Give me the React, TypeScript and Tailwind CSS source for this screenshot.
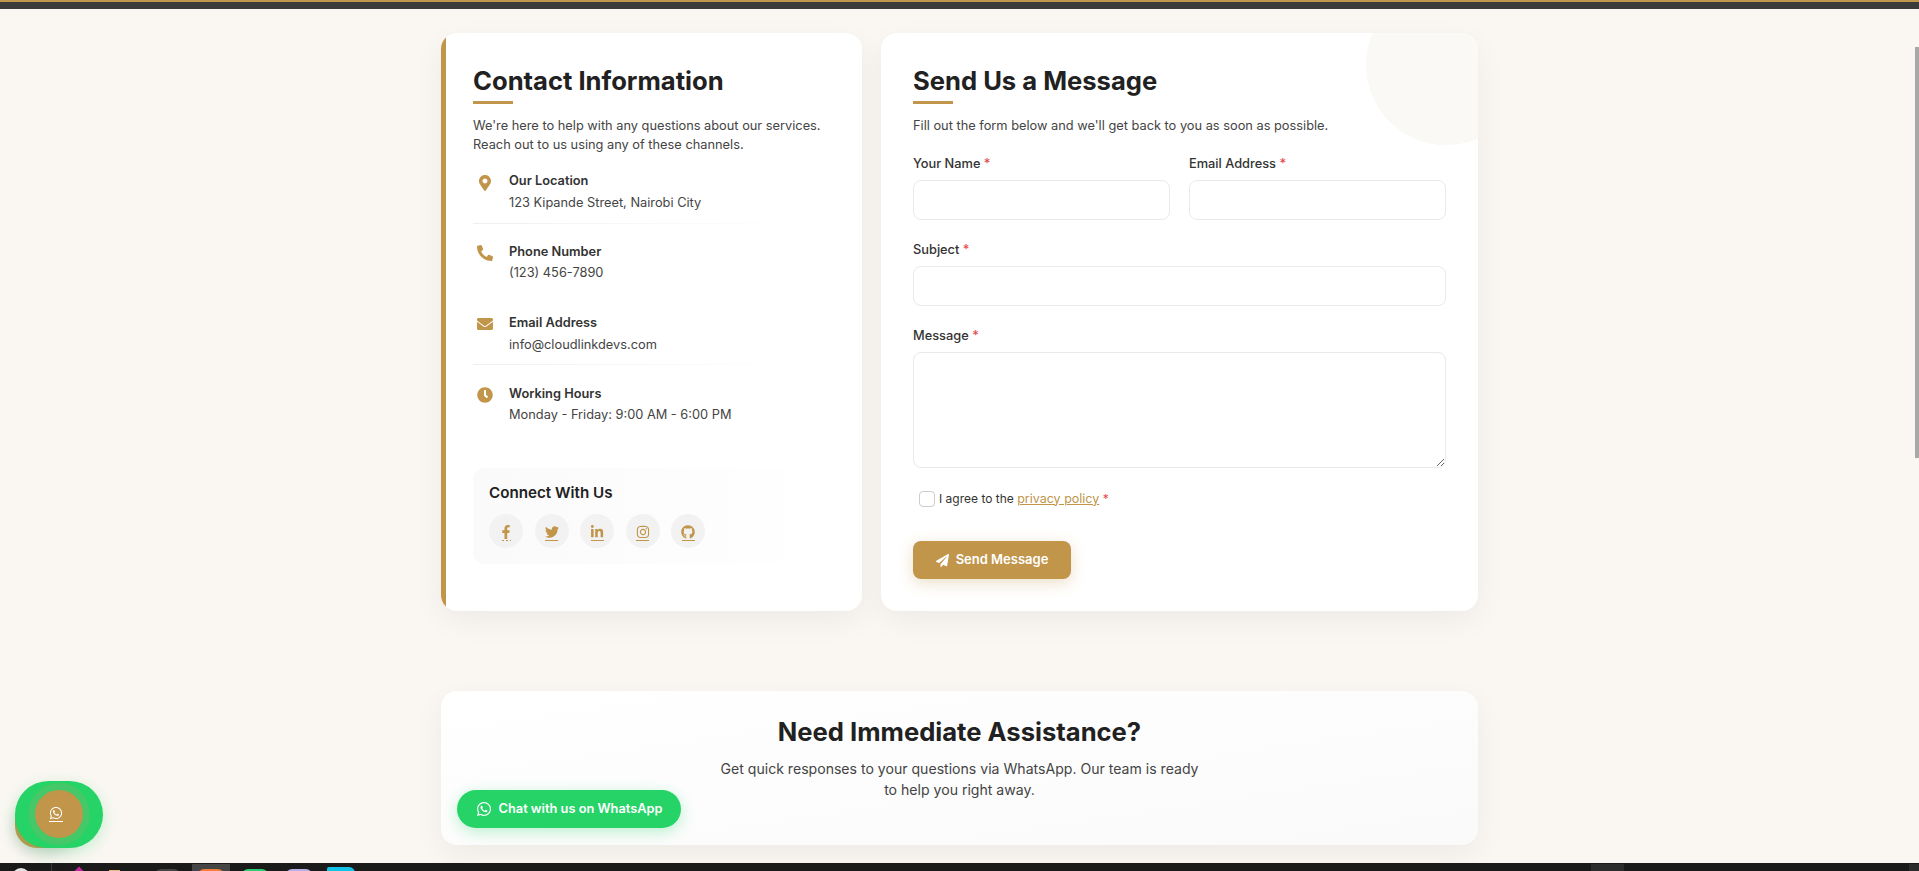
import React from "react";
import { FaMapMarkerAlt, FaPhoneAlt, FaEnvelope, FaClock, FaFacebookF, FaTwitter, FaLinkedinIn, FaInstagram, FaGithub, FaPaperPlane, FaWhatsapp } from "react-icons/fa";

function Title({ children }: { children: React.ReactNode }) {
  return (
    <div>
      <h2 className="text-[25.6px] leading-[32px] font-bold text-[#212121]">{children}</h2>
      <div className="mt-[4px] h-[3px] w-[40px] bg-[#c1954a]" />
    </div>
  );
}

function Info({ icon, label, value, gap, divider }: { icon: React.ReactNode; label: string; value: string; gap: string; divider?: string }) {
  return (
    <div className="relative h-[71px]">
      <div className="flex">
        <div className="flex h-[20px] w-[24px] shrink-0 items-start justify-center pt-[2px] text-[16px] text-[#c1954a]">{icon}</div>
        <div className="ml-[12px]">
          <div className="text-[12.8px] leading-[18px] font-semibold text-[#333333]">{label}</div>
          <div className={`text-[12.8px] leading-[18px] text-[#444444] ${gap}`}>{value}</div>
        </div>
      </div>
      {divider && <div className={`absolute left-0 h-px w-[320px] bg-gradient-to-r from-[#f0f0f0] to-white ${divider}`} />}
    </div>
  );
}

function Social({ children, dashed }: { children: React.ReactNode; dashed?: boolean }) {
  return (
    <div className="flex h-[34px] w-[34px] flex-col items-center justify-center rounded-full bg-[#f2f2f2] pt-[3px] text-[14px] text-[#c1954a]">
      {children}
      {dashed ? (
        <div className="mt-px flex h-px w-[9px] justify-between">
          <span className="w-[2px] bg-[#c1954a]" />
          <span className="w-[2px] bg-[#c1954a]" />
          <span className="w-[1px] bg-[#c1954a]" />
        </div>
      ) : (
        <div className="mt-px h-px w-[13px] bg-[#c1954a]" />
      )}
    </div>
  );
}

function Field({ label, children }: { label: string; children: React.ReactNode }) {
  return (
    <div>
      <label className="block h-[27px] text-[12.8px] leading-[22px] font-medium text-[#333333]">
        {label} <span className="text-[#e5484d]">*</span>
      </label>
      {children}
    </div>
  );
}

const inputClass = "block h-[40px] w-full rounded-[8px] border border-[#e9e9e9] bg-white outline-none";

export default function App() {
  return (
    <div className="relative flex h-[871px] flex-col overflow-hidden bg-[#faf7f2] font-['Inter',sans-serif]">
      <div className="h-[2px] shrink-0 bg-[#c1954a]" />
      <div className="h-[7px] shrink-0 bg-[#3b3b3b]" />

      <main className="mx-auto w-[1037px] flex-1 overflow-visible pt-[24px]">
        <div className="grid grid-cols-[421px_597px] gap-[19px]">
          <section className="relative h-[578px] overflow-hidden rounded-[16px] bg-white px-[32px] pt-[32px] shadow-[0_10px_30px_rgba(0,0,0,0.05)]">
            <div className="absolute top-0 bottom-0 left-0 w-[5px] bg-[#c1954a]" />
            <Title>Contact Information</Title>
            <p className="mt-[12px] text-[12.8px] leading-[19px] text-[#444444]">
              We're here to help with any questions about our services.
              <br />
              Reach out to us using any of these channels.
            </p>
            <div className="mt-[18px]">
              <Info icon={<FaMapMarkerAlt className="mt-px" />} label="Our Location" value="123 Kipande Street, Nairobi City" gap="mt-[4px]" divider="top-[51px]" />
              <Info icon={<FaPhoneAlt />} label="Phone Number" value="(123) 456-7890" gap="mt-[3px]" />
              <Info icon={<FaEnvelope />} label="Email Address" value="info@cloudlinkdevs.com" gap="mt-[4px]" divider="top-[50px]" />
              <Info icon={<FaClock />} label="Working Hours" value="Monday - Friday: 9:00 AM - 6:00 PM" gap="mt-[3px]" />
            </div>
            <div className="mt-[12px] h-[96px] w-[357px] rounded-[12px] bg-gradient-to-r from-[#fafafa] to-white px-[16px] pt-[14px]">
              <h3 className="text-[15.2px] leading-[22px] font-semibold text-[#212121]">Connect With Us</h3>
              <div className="mt-[10px] flex gap-[11.6px]">
                <Social dashed><FaFacebookF /></Social>
                <Social><FaTwitter /></Social>
                <Social><FaLinkedinIn /></Social>
                <Social><FaInstagram /></Social>
                <Social><FaGithub /></Social>
              </div>
            </div>
          </section>

          <section className="relative h-[578px] overflow-hidden rounded-[16px] bg-white px-[32px] pt-[32px] shadow-[0_10px_30px_rgba(0,0,0,0.05)]">
            <div className="absolute -top-[48px] -right-[48px] h-[160px] w-[160px] rounded-full bg-[#fbf9f5]" />
            <div className="relative">
              <Title>Send Us a Message</Title>
              <p className="mt-[12px] text-[12.8px] leading-[19px] text-[#444444]">Fill out the form below and we'll get back to you as soon as possible.</p>
              <div className="mt-[18px] grid grid-cols-2 gap-x-[19px]">
                <Field label="Your Name"><input className={inputClass} /></Field>
                <Field label="Email Address"><input className={inputClass} /></Field>
              </div>
              <div className="mt-[19px]">
                <Field label="Subject"><input className={inputClass} /></Field>
              </div>
              <div className="mt-[19px]">
                <Field label="Message">
                  <textarea className="block h-[116px] w-full resize-y rounded-[8px] border border-[#e9e9e9] bg-white outline-none" />
                </Field>
              </div>
              <div className="mt-[23px] flex h-[16px] items-center pl-[6px] text-[12px] text-[#333333]">
                <input type="checkbox" className="h-[16px] w-[16px] appearance-none rounded-[4px] border border-[#cccccc] bg-white" />
                <span className="ml-[4px]">
                  I agree to the <a className="text-[12.5px] text-[#c1954a] underline">privacy policy</a> <span className="text-[#e5484d]">*</span>
                </span>
              </div>
              <button className="mt-[34px] flex h-[38px] w-[158px] items-center justify-center gap-[7px] rounded-[8px] bg-[#c1954a] text-[13px] font-semibold text-white shadow-[0_4px_15px_rgba(193,149,74,0.3)]">
                <FaPaperPlane className="text-[13px]" />
                Send Message
              </button>
            </div>
          </section>
        </div>

        <section className="mt-[80px] h-[154px] rounded-[16px] bg-gradient-to-br from-white to-[#fafafa] pt-[24px] text-center shadow-[0_10px_30px_rgba(0,0,0,0.05)]">
          <h2 className="text-[25.6px] leading-[34px] font-bold text-[#212121]">Need Immediate Assistance?</h2>
          <p className="mx-auto mt-[9px] w-[490px] text-[14.08px] leading-[21px] text-[#444444]">
            Get quick responses to your questions via WhatsApp. Our team is ready to help you right away.
          </p>
        </section>
      </main>

      <footer className="flex h-[8px] shrink-0 items-start overflow-hidden bg-[#1a1a1a]">
        <div className="mt-[5px] ml-[12px] h-[20px] w-[18px] rounded-full bg-[#e4e4e4]" />
        <div className="ml-[21px] h-[8px] w-px bg-[#3a3a3a]" />
        <div className="mt-[6px] ml-[21px] h-[12px] w-[12px] rotate-45 bg-[#c026a0]" />
        <div className="mt-[7px] ml-[24px] h-[8px] w-[11px] bg-[#e8b878]" />
        <div className="mt-[6px] ml-[35px] h-[8px] w-[25px] rounded-t-[6px] bg-[#444444]" />
        <div className="mt-[1px] ml-[12px] flex h-[8px] w-[38px] justify-center bg-[#454545] pt-[5px]">
          <div className="h-[8px] w-[26px] rounded-t-[6px] bg-[#f47b3a]" />
        </div>
        <div className="mt-[6px] ml-[12px] h-[8px] w-[26px] rounded-t-[6px] bg-[#2ecc71]" />
        <div className="mt-[6px] ml-[18px] h-[8px] w-[26px] rounded-t-[6px] bg-[#b9aee6]" />
        <div className="mt-[4px] ml-[15px] h-[8px] w-[28px] rounded-tl-[2px] rounded-tr-[6px] bg-[#12c2e9]" />
        <div className="mt-[1px] ml-[1236px] h-[8px] w-[33px] bg-[#2c2c2c]" />
        <div className="mt-[1px] ml-[285px] h-[8px] w-[10px] bg-[#2c2c2c]" />
      </footer>

      <div className="absolute top-[47px] right-0 h-[411px] w-[4px] bg-[#a8a8a8]" />

      <a className="absolute top-[790px] left-[457px] flex h-[38px] w-[224px] items-center justify-center gap-[7px] rounded-full bg-[#25d366] text-[12.8px] font-semibold text-white shadow-[0_4px_15px_rgba(37,211,102,0.3)]">
        <FaWhatsapp className="text-[16px]" />
        Chat with us on WhatsApp
      </a>

      <div className="absolute top-[781px] left-[15px] h-[67px] w-[88px]">
        <div className="absolute bottom-0 left-0 h-[50px] w-[60px] rounded-[22px] bg-[#c1954a] shadow-[0_5px_15px_rgba(0,0,0,0.15)]" />
        <div className="absolute inset-0 rounded-tl-[34px] rounded-tr-[34px] rounded-br-[34px] rounded-bl-[32px] bg-[#25d366] shadow-[0_4px_15px_rgba(37,211,102,0.25)]" />
        <div className="absolute top-[2px] left-[13px] flex h-[62px] w-[62px] items-center justify-center rounded-full bg-[#45c867]">
          <div className="flex h-[48px] w-[48px] flex-col items-center justify-center rounded-full bg-[#c1954a] pr-[6px] text-[14px] text-white">
            <FaWhatsapp />
            <div className="mt-px h-px w-[14px] bg-white" />
          </div>
        </div>
      </div>
    </div>
  );
}
